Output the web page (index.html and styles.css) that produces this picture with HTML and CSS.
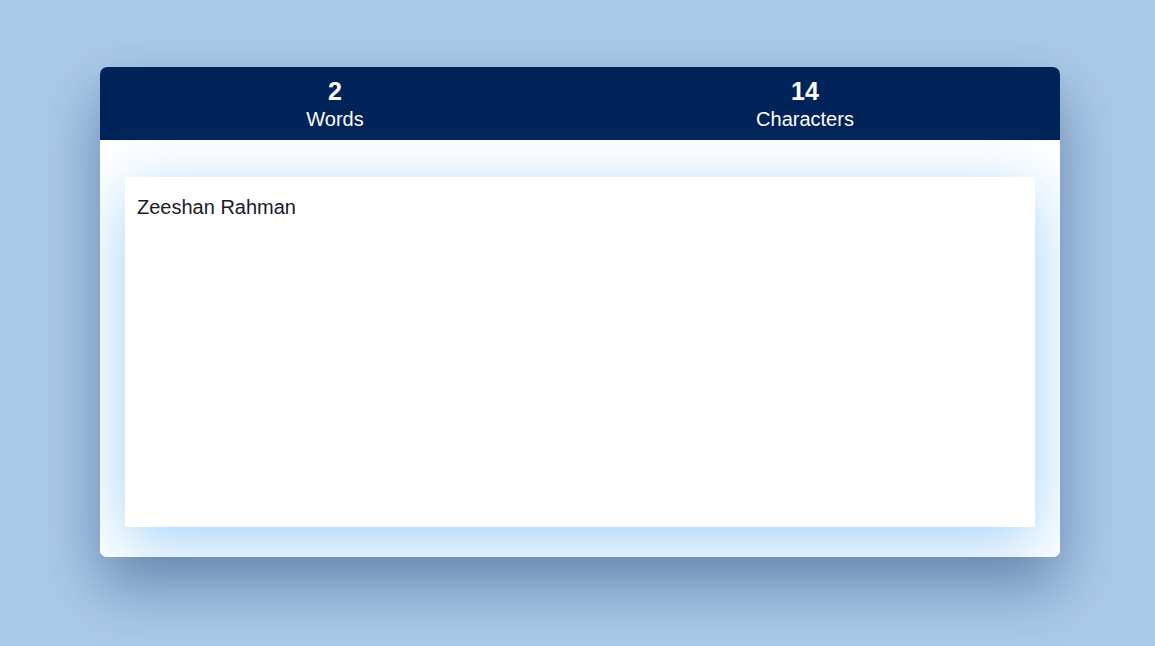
FILE: index.html
```
<!DOCTYPE html>
<html>
<head>
<meta charset="utf-8">
<link rel="stylesheet" href="styles.css">
</head>
<body>
<div class="card">
  <div class="stats">
    <div class="stat"><div class="num">2</div><div class="label">Words</div></div>
    <div class="stat"><div class="num">14</div><div class="label">Characters</div></div>
  </div>
  <div class="body">
    <div class="editor">Zeeshan Rahman</div>
  </div>
</div>
</body>
</html>
```
FILE: styles.css
```
html, body {
  margin: 0;
  padding: 0;
}
body {
  background: #abc9e8;
  font-family: "Liberation Sans", Arial, sans-serif;
  padding: 67px 95px 0 100px;
  height: 646px;
  box-sizing: border-box;
  overflow: hidden;
}
.card {
  width: 960px;
  height: 490px;
  border-radius: 7px;
  overflow: hidden;
  background: #ffffff;
  box-shadow: 0 28px 60px rgba(10, 40, 90, 0.42);
  display: flex;
  flex-direction: column;
}
.stats {
  background: #002459;
  height: 73px;
  display: flex;
  padding-right: 20px;
  color: #fff;
  flex-shrink: 0;
}
.stat {
  flex: 1;
  text-align: center;
  padding-top: 10px;
}
.num {
  font-size: 25px;
  font-weight: bold;
  line-height: 28px;
}
.label {
  font-size: 20px;
  line-height: 24px;
  margin-top: 2px;
}
.body {
  flex: 1;
  background: #ffffff;
  padding: 37px 25px 30px;
}
.editor {
  background: #fff;
  height: 350px;
  box-sizing: border-box;
  padding: 19px 12px;
  font-size: 20px;
  color: #1a1a2a;
  box-shadow: 0 16px 60px rgba(100, 180, 240, 0.6);
}
```
